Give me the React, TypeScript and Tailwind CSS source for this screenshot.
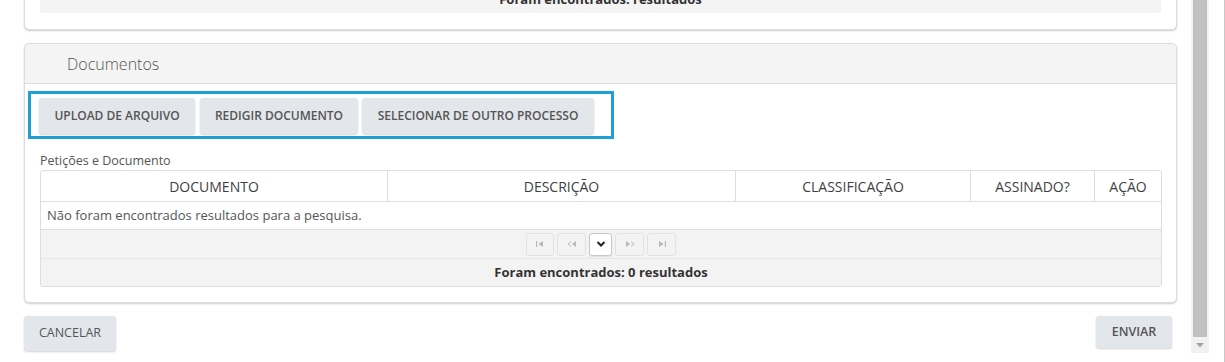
import React from "react";

const btn =
  "h-[36px] bg-[#e3e6eb] text-[#555] text-[12px] font-semibold uppercase rounded-[3px] shadow-[0_1px_2px_rgba(0,0,0,0.18)] whitespace-nowrap flex items-center justify-center";

function PagIcon({ kind }: { kind: "first" | "prev" | "next" | "last" }) {
  const c = "#b9b9b9";
  return (
    <svg width="10" height="8" viewBox="0 0 10 8">
      {kind === "first" && (
        <>
          <rect x="1" y="1" width="1.2" height="6" fill={c} />
          <path d="M8 1 L3.5 4 L8 7 Z" fill={c} />
        </>
      )}
      {kind === "prev" && (
        <>
          <path d="M4 1.5 L1 4 L4 6.5" stroke={c} strokeWidth="1" fill="none" />
          <path d="M9 1 L5 4 L9 7 Z" fill={c} />
        </>
      )}
      {kind === "next" && (
        <>
          <path d="M1 1 L5 4 L1 7 Z" fill={c} />
          <path d="M6 1.5 L9 4 L6 6.5" stroke={c} strokeWidth="1" fill="none" />
        </>
      )}
      {kind === "last" && (
        <>
          <path d="M2 1 L6.5 4 L2 7 Z" fill={c} />
          <rect x="7.8" y="1" width="1.2" height="6" fill={c} />
        </>
      )}
    </svg>
  );
}

export default function App() {
  const cols = [
    { t: "DOCUMENTO", w: "w-[347px]" },
    { t: "DESCRIÇÃO", w: "w-[348px]" },
    { t: "CLASSIFICAÇÃO", w: "w-[235px]" },
    { t: "ASSINADO?", w: "w-[124px]" },
    { t: "AÇÃO", w: "flex-1" },
  ];
  return (
    <div className="w-[1225px] h-[362px] bg-white flex overflow-hidden font-['Open_Sans',sans-serif] text-[#555]">
      <div className="w-[1191px] flex flex-col shrink-0">
        {/* top card (cut) */}
        <div className="ml-[24px] mr-[14px] -mt-[15px] border border-[#dcdcdc] rounded-[5px] bg-white shadow-[0_1px_2px_rgba(0,0,0,0.2)] px-[15px] pb-[16px]">
          <div className="h-[27px] bg-[#f4f4f4] rounded-b-[3px] flex items-center justify-center text-[13px] font-bold text-[#333]">
            Foram encontrados: resultados
          </div>
        </div>

        {/* Documentos card */}
        <div className="ml-[24px] mr-[14px] mt-[13px] border border-[#dcdcdc] rounded-[5px] bg-white shadow-[0_1px_2px_rgba(0,0,0,0.2)]">
          <div className="h-[40px] bg-[#f4f4f4] border-b border-[#dcdcdc] rounded-t-[5px] flex items-center pl-[42px] text-[16px] font-light text-[#555]">
            Documentos
          </div>
          <div className="pt-[7px] pb-[15px]">
            <div className="ml-[3px] w-fit border-[3px] border-[#1e9fd7] pt-[4px] pb-[2px] pl-[8px] pr-[17px] flex">
              <button className={`${btn} w-[156px]`}>Upload de arquivo</button>
              <button className={`${btn} w-[158px] ml-[5px]`}>Redigir documento</button>
              <button className={`${btn} w-[232px] ml-[4px]`}>Selecionar de outro processo</button>
            </div>
            <div className="ml-[15px] mt-[12px] text-[12.5px] leading-[19px] text-[#555]">
              Petições e Documento
            </div>
            <div className="ml-[15px] w-[1122px] border border-[#dddddd] rounded-[3px]">
              <div className="flex h-[31px] border-b border-[#dddddd]">
                {cols.map((c, i) => (
                  <div
                    key={c.t}
                    className={`${c.w} flex items-center justify-center text-[14px] text-[#3f3f3f] ${i < cols.length - 1 ? "border-r border-[#dddddd]" : ""}`}
                  >
                    {c.t}
                  </div>
                ))}
              </div>
              <div className="h-[28px] border-b border-[#dddddd] flex items-center pl-[6px] text-[13px] text-[#555]">
                Não foram encontrados resultados para a pesquisa.
              </div>
              <div className="h-[29px] bg-[#f3f3f3] border-b border-[#e6e6e6] flex items-center justify-center gap-[3px]">
                <div className="w-[28px] h-[23px] border border-[#e2e2e2] rounded-[3px] bg-[#f3f3f3] flex items-center justify-center">
                  <PagIcon kind="first" />
                </div>
                <div className="w-[29px] h-[23px] border border-[#e2e2e2] rounded-[3px] bg-[#f3f3f3] flex items-center justify-center">
                  <PagIcon kind="prev" />
                </div>
                <div className="w-[23px] h-[23px] border border-[#c8c8c8] rounded-[3px] bg-white flex items-center justify-center shadow-[0_1px_1px_rgba(0,0,0,0.08)]">
                  <svg width="10" height="8" viewBox="0 0 10 8">
                    <path d="M1.5 2 L5 5.5 L8.5 2" stroke="#222" strokeWidth="2" fill="none" />
                  </svg>
                </div>
                <div className="w-[29px] h-[23px] border border-[#e2e2e2] rounded-[3px] bg-[#f3f3f3] flex items-center justify-center">
                  <PagIcon kind="next" />
                </div>
                <div className="w-[29px] h-[23px] border border-[#e2e2e2] rounded-[3px] bg-[#f3f3f3] flex items-center justify-center">
                  <PagIcon kind="last" />
                </div>
              </div>
              <div className="h-[27px] bg-[#f3f3f3] rounded-b-[3px] flex items-center justify-center text-[13px] font-bold text-[#333]">
                Foram encontrados: 0 resultados
              </div>
            </div>
          </div>
        </div>

        {/* bottom buttons */}
        <div className="mt-[13px] ml-[24px] mr-[19px] flex justify-between items-start">
          <button className="h-[35px] w-[92px] bg-[#e3e6eb] text-[12.5px] text-[#555] uppercase rounded-[3px] shadow-[0_1px_2px_rgba(0,0,0,0.18)]">
            Cancelar
          </button>
          <button className="h-[32px] w-[76px] bg-[#e3e6eb] text-[12.5px] font-semibold text-[#555] uppercase rounded-[3px] shadow-[0_1px_2px_rgba(0,0,0,0.18)]">
            Enviar
          </button>
        </div>
      </div>

      {/* scrollbar */}
      <div className="w-[18px] h-[353px] bg-[#f1f1f1] flex flex-col items-center shrink-0">
        <div className="w-[14px] h-[337px] bg-[#c1c1c1]" />
        <div className="flex-1 flex items-center justify-center">
          <svg width="8" height="5" viewBox="0 0 8 5">
            <path d="M0 0 L8 0 L4 4.5 Z" fill="#a3a3a3" />
          </svg>
        </div>
      </div>
      <div className="flex-1" />
      <div className="w-[1px] h-full bg-[#c8c8c8]" />
    </div>
  );
}
